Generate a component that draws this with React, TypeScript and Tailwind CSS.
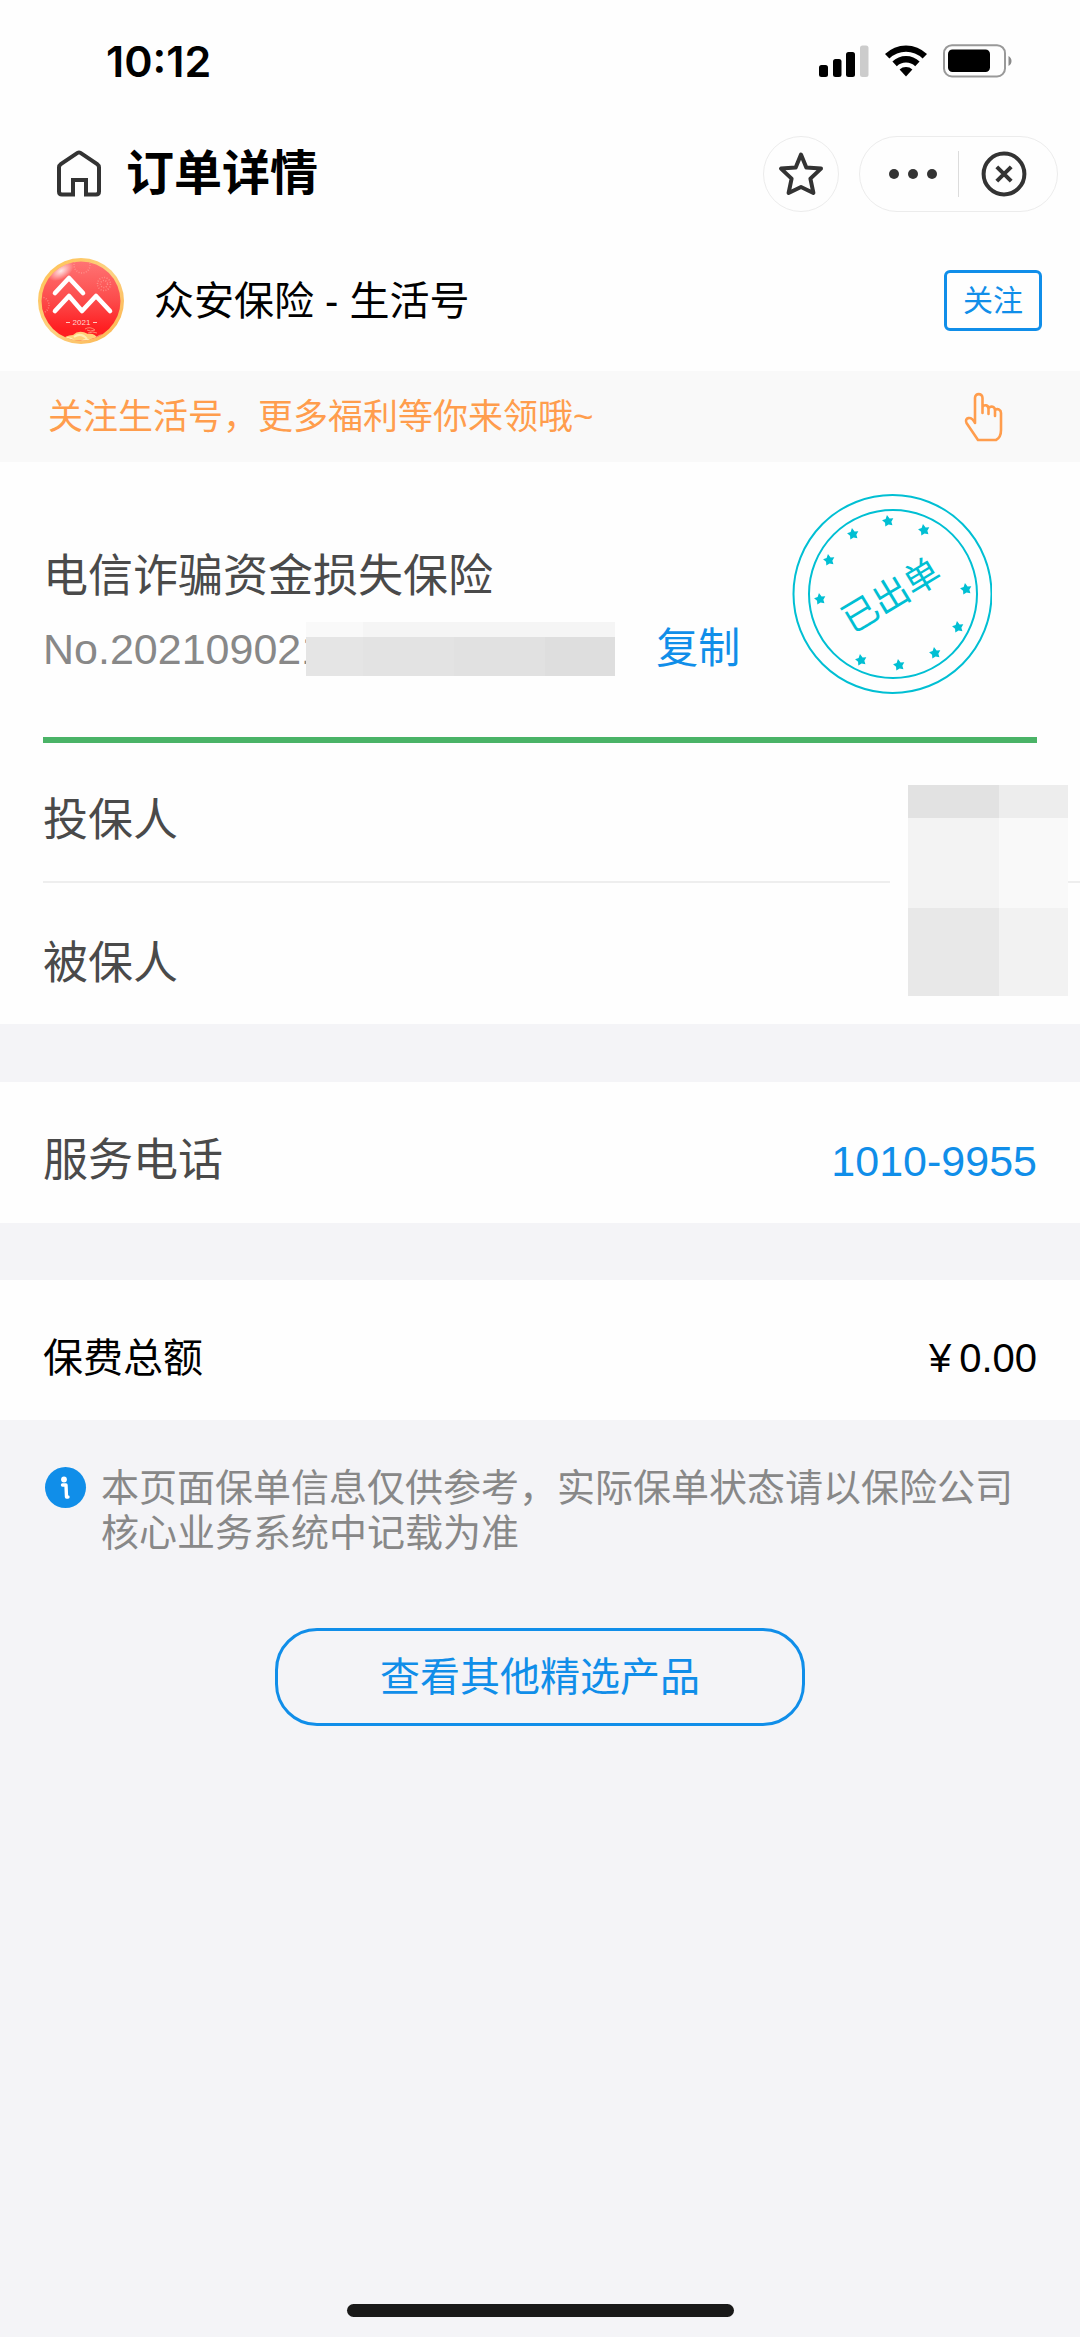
import React from "react";

const BLUE = "#108ee9";

function SignalIcon() {
  return (
    <svg width="50" height="33" viewBox="0 0 50 33" aria-hidden="true">
      <rect x="0" y="20" width="9" height="12" rx="2.5" />
      <rect x="14" y="14" width="8.5" height="18" rx="2.5" />
      <rect x="27" y="7" width="9" height="25" rx="2.5" />
      <rect x="41" y="0.5" width="8.5" height="31.5" rx="2.5" fill="#cccccc" />
    </svg>
  );
}

function WifiIcon() {
  return (
    <svg width="44" height="33" viewBox="0 0 44 33" aria-hidden="true">
      <path d="M1 9 A 30 30 0 0 1 43 9 L 38.6 13.4 A 24 24 0 0 0 5.4 13.4 Z" />
      <path d="M8.4 16.6 A 19.5 19.5 0 0 1 35.6 16.6 L 31.2 21.2 A 13.5 13.5 0 0 0 12.8 21.2 Z" />
      <path d="M15.6 24.4 A 9.5 9.5 0 0 1 28.4 24.4 L 22 31.6 Z" />
    </svg>
  );
}

function BatteryIcon() {
  return (
    <svg width="70" height="34" viewBox="0 0 70 34" aria-hidden="true">
      <rect x="1" y="1.2" width="61" height="31.3" rx="8" fill="none" stroke="#999999" strokeWidth="2" />
      <rect x="5" y="5.5" width="42" height="22.5" rx="4.5" />
      <path d="M65.5 12 C 69.5 14 69.5 20 65.5 22 Z" fill="#8a8a8a" />
    </svg>
  );
}

function HomeIcon() {
  return (
    <svg width="46" height="48" viewBox="0 0 46 48" fill="none" stroke="#333333" strokeWidth="4" aria-hidden="true">
      <path d="M17 44.5 H6 Q3 44.5 3 41.5 V17.5 Q3 15.5 4.8 14.2 L21.5 2.9 Q23 2 24.5 2.9 L41.2 14.2 Q43 15.5 43 17.5 V41.5 Q43 44.5 40 44.5 H30 V30 H17 V46.5" />
    </svg>
  );
}

function StarIcon() {
  return (
    <svg width="48" height="48" viewBox="0 0 48 48" fill="none" stroke="#333333" strokeWidth="4" strokeLinejoin="round" aria-hidden="true">
      <path d="M24 4.5 L29.3 17.6 L44 18.6 L33.4 28.6 L36.4 43 L24 37 L11.600 43 L14.600 28.600 L4 18.6 L18.7 17.6 Z" />
    </svg>
  );
}

function DotsIcon() {
  return (
    <svg width="50" height="12" viewBox="0 0 50 12" fill="#333333" aria-hidden="true">
      <circle cx="6" cy="6" r="5" />
      <circle cx="25" cy="6" r="5" />
      <circle cx="44" cy="6" r="5" />
    </svg>
  );
}

function CloseIcon() {
  return (
    <svg width="46" height="46" viewBox="0 0 46 46" fill="none" stroke="#333333" strokeWidth="4" aria-hidden="true">
      <circle cx="23" cy="23" r="20.4" />
      <path d="M15.8 15.8 L30.2 30.2 M30.2 15.8 L15.8 30.2" />
    </svg>
  );
}

function HandIcon() {
  return (
    <svg width="40" height="50" viewBox="0 0 40 50" fill="none" stroke="#ff9d4d" strokeWidth="2.6" strokeLinejoin="round" strokeLinecap="round" aria-hidden="true">
      <path d="M11 31 V6 C11 .8 18.500 .8 18.500 6 V21 M18.500 15 C20 12.500 24.500 12.500 24.500 17 V22 M24.500 16 C27 13.500 31 14.500 31 18.500 V24 M31 18 C34 16 37 18 37 21 V38 C37 43 35 46.500 32 48 H14 L2.500 31 C0 26 7 23 11 31" />
    </svg>
  );
}

function AccountLogo() {
  return (
    <svg width="86" height="88" viewBox="0 0 86 88" role="img" aria-label="众安保险">
      <defs>
        <linearGradient id="logoRed" x1="0" y1="0" x2="0" y2="1">
          <stop offset="0" stopColor="#ff7474" />
          <stop offset="0.5" stopColor="#fc4a4a" />
          <stop offset="0.85" stopColor="#ff1f22" />
        </linearGradient>
        <linearGradient id="logoGold" x1="0" y1="0" x2="1" y2="1">
          <stop offset="0" stopColor="#ffc04e" />
          <stop offset="0.5" stopColor="#fcd283" />
          <stop offset="1" stopColor="#fdb147" />
        </linearGradient>
        <radialGradient id="logoShine">
          <stop offset="0" stopColor="#fff" stopOpacity="0.85" />
          <stop offset="1" stopColor="#fff" stopOpacity="0" />
        </radialGradient>
        <clipPath id="logoClip">
          <circle cx="43" cy="44" r="39.5" />
        </clipPath>
      </defs>
      <circle cx="43" cy="44" r="43" fill="url(#logoGold)" />
      <circle cx="43" cy="44" r="39.5" fill="url(#logoRed)" />
      <g clipPath="url(#logoClip)">
        <ellipse cx="23" cy="14" rx="14" ry="8" transform="rotate(-32 23 14)" fill="url(#logoShine)" />
        <g fill="none" stroke="#ffaaa0" strokeOpacity="0.6" strokeWidth="1.5" strokeDasharray="1 1.5">
          <circle cx="66" cy="27" r="6.5" />
          <circle cx="66" cy="27" r="3.5" />
          <circle cx="44" cy="8" r="8" />
          <circle cx="3" cy="48" r="8" />
        </g>
        <path d="M47 72 q5 -3 10 1 q-5 2 -8 0 M50 76 q5 -2 9 0" fill="none" stroke="#ff8a70" strokeWidth="1" />
        <path d="M20 90 Q24 78 35 78 Q41 72 50 77 Q57 76 60 82 Q64 76 72 78 V90 Z" fill="#ffd27a" />
        <path d="M24 84 q6 -6 12 0 M36 80 q7 -5 13 2 M42 86 q6 -6 13 -1 M30 88 q6 -5 12 0" fill="none" stroke="#fff0b4" strokeWidth="2" />
        <path d="M58 81 q4 -3 8 -3" fill="none" stroke="#ff9a8a" strokeWidth="2" />
      </g>
      <path d="M17 36 L31 21 L45 36 M17 54 L31 39 L44 54 L58 39 L72 54" fill="none" stroke="#fff" strokeWidth="4.6" strokeLinecap="round" strokeLinejoin="round" />
      <path d="M28 65.5 h4 M55 65.5 h4" stroke="#ffc9c0" strokeWidth="1" />
      <text x="43.5" y="68" textAnchor="middle" fontSize="8" fill="#ffd6d0" fontFamily="Liberation Sans, sans-serif">2021</text>
    </svg>
  );
}

const STAMP_STARS: [number, number][] = [
  [96, 27],
  [132, 36],
  [174, 95],
  [166, 133],
  [143, 159],
  [107, 171],
  [69, 166],
  [28, 105],
  [37, 66],
  [61, 40],
];

function IssuedStamp() {
  return (
    <svg width="200" height="200" viewBox="0 0 200 200" role="img" aria-label="已出单" className="shrink-0">
      <g fill="none" stroke="#00bfd3" strokeWidth="2">
        <circle cx="100.5" cy="100" r="99" />
        <circle cx="101" cy="100" r="84" />
      </g>
      {STAMP_STARS.map(([x, y]) => (
        <path
          key={`${x}-${y}`}
          transform={`translate(${x} ${y}) rotate(-10)`}
          d="M0 -6 L2 -2.3 L5.700 -1.8 L3.2 1.2 L3.6 5 L0 3.5 L-3.6 5 L-3.2 1.2 L-5.700 -1.8 L-2 -2.3 Z"
          fill="#00bfd3"
        />
      ))}
      <text
        x="99"
        y="114"
        textAnchor="middle"
        fontSize="36"
        fill="#00bfd3"
        transform="rotate(-31 99 101)"
        fontFamily="'Noto Sans CJK SC', sans-serif"
      >
        已出单
      </text>
    </svg>
  );
}

function InfoIcon() {
  return (
    <svg width="42" height="42" viewBox="0 0 42 42" className="shrink-0" aria-hidden="true">
      <circle cx="20.5" cy="21.5" r="20.5" fill={BLUE} />
      <circle cx="19" cy="13.5" r="2.9" fill="#fff" />
      <path d="M17.5 19 H21 L21.5 31 H23" fill="none" stroke="#fff" strokeWidth="3.4" strokeLinejoin="round" strokeLinecap="round" />
    </svg>
  );
}

function StatusBar() {
  return (
    <div className="flex h-[122px] items-center justify-between pl-[106px] pr-[67px]">
      <time className="font-['Inter',sans-serif] text-[43px] font-semibold leading-[60px] text-black">10:12</time>
      <div className="flex items-center gap-[15px]">
        <SignalIcon />
        <WifiIcon />
        <BatteryIcon />
      </div>
    </div>
  );
}

function NavBar() {
  return (
    <header className="flex h-[104px] items-center pl-14 pr-[22px]">
      <button type="button" aria-label="首页">
        <HomeIcon />
      </button>
      <h1 className="ml-6 flex-1 text-[48px] font-bold leading-[64px] text-black">订单详情</h1>
      <button
        type="button"
        aria-label="收藏"
        className="flex size-[76px] items-center justify-center rounded-full border border-[#ececec]"
      >
        <StarIcon />
      </button>
      <div className="ml-5 flex h-[76px] w-[199px] items-center rounded-full border border-[#ececec]">
        <button type="button" aria-label="更多" className="flex h-full flex-1 items-center justify-end pr-5">
          <DotsIcon />
        </button>
        <span className="h-[46px] w-px bg-[#dcdcdc]" />
        <button type="button" aria-label="关闭" className="flex h-full w-[98px] items-center pl-[22px]">
          <CloseIcon />
        </button>
      </div>
    </header>
  );
}

function Account() {
  return (
    <section>
      <div className="flex h-[145px] items-center pl-[38px] pr-[38px] pt-1">
        <AccountLogo />
        <p className="ml-[30px] flex-1 text-[40px] leading-[60px] text-black">众安保险 - 生活号</p>
        <button
          type="button"
          className="h-[61px] w-[98px] rounded-md border-3 border-[#108ee9] text-[30px] leading-[40px] text-[#108ee9]"
        >
          关注
        </button>
      </div>
      <div className="flex h-[91px] items-center justify-between bg-[#f9f9f9] pl-12 pr-[76px] text-[#ff9d4d]">
        <p className="text-[35px] leading-[50px]">关注生活号，更多福利等你来领哦~</p>
        <HandIcon />
      </div>
    </section>
  );
}

function PolicyNumberMask() {
  return (
    <span className="relative -ml-[19px] flex h-[54px] w-[309px] flex-col">
      <span className="flex h-[15px]">
        <span className="w-[57px] bg-[#f9f9f9]" />
        <span className="flex-1 bg-[#f5f5f5]" />
      </span>
      <span className="flex flex-1">
        <span className="w-[57px] bg-[#e5e5e5]" />
        <span className="w-[91px] bg-[#e3e3e3]" />
        <span className="w-[91px] bg-[#e1e1e1]" />
        <span className="flex-1 bg-[#dedede]" />
      </span>
    </span>
  );
}

function NameMask() {
  return (
    <div className="absolute right-3 top-[42px] bg-[#fefefe] pl-[18px]">
      <div className="grid h-[211px] w-[160px] grid-cols-[91px_1fr] grid-rows-[33px_90px_1fr]">
        <span className="bg-[#e2e2e2]" />
        <span className="bg-[#ededed]" />
        <span className="bg-[#f3f3f3]" />
        <span className="bg-[#f9f9f9]" />
        <span className="bg-[#e8e8e8]" />
        <span className="bg-[#f2f2f2]" />
      </div>
    </div>
  );
}

function Policy() {
  return (
    <section className="bg-[#fefefe] text-[#4a4a4a]">
      <div className="mx-[43px] flex items-start justify-between border-b-6 border-[#4ab367] pb-[43px] pr-[45px] pt-8">
        <div className="pt-[51px]">
          <h2 className="text-[45px] leading-[64px]">电信诈骗资金损失保险</h2>
          <div className="mt-2 flex h-[64px] items-center">
            <span className="text-[43px] leading-[64px] text-[#888888]">No.202109021</span>
            <PolicyNumberMask />
            <button type="button" className="ml-[41px] text-[42px] leading-[64px] text-[#108ee9]">
              复制
            </button>
          </div>
        </div>
        <IssuedStamp />
      </div>
      <div className="relative pl-[43px] text-[45px] leading-[60px]">
        <p className="border-b-2 border-[#eeeeee] pb-[30px] pt-12">投保人</p>
        <p className="pb-[30px] pt-[51px]">被保人</p>
        <NameMask />
      </div>
    </section>
  );
}

export default function App() {
  return (
    <main className="flex min-h-screen flex-col bg-[#f4f4f7] font-['Liberation_Sans','Noto_Sans_CJK_SC',sans-serif]">
      <div className="bg-[#fefefe]">
        <StatusBar />
        <NavBar />
        <Account />
      </div>
      <Policy />
      <section className="mt-[58px] flex h-[141px] items-center justify-between bg-[#fefefe] px-[43px] pt-4">
        <span className="text-[45px] leading-[60px] text-[#4a4a4a]">服务电话</span>
        <a href="tel:1010-9955" className="text-[43px] leading-[60px] text-[#108ee9]">
          1010-9955
        </a>
      </section>
      <section className="mt-[57px] flex h-[140px] items-center justify-between bg-[#fefefe] px-[43px] pt-4 text-[40px] leading-[60px] text-black">
        <span>保费总额</span>
        <span className="flex gap-2">
          <span>¥</span>
          <span>0.00</span>
        </span>
      </section>
      <div className="flex items-start gap-[14px] pl-[45px] pr-[60px] pt-[46px]">
        <InfoIcon />
        <p className="text-[38px] leading-[45px] text-[#888888]">
          本页面保单信息仅供参考，实际保单状态请以保险公司核心业务系统中记载为准
        </p>
      </div>
      <button
        type="button"
        className="mt-[72px] h-[98px] w-[530px] self-center rounded-[42px] border-3 border-[#108ee9] text-[40px] leading-[60px] text-[#108ee9]"
      >
        查看其他精选产品
      </button>
      <div className="mt-auto flex justify-center pb-5 pt-10">
        <span className="h-[13px] w-[387px] rounded-full bg-[#191919]" />
      </div>
    </main>
  );
}
